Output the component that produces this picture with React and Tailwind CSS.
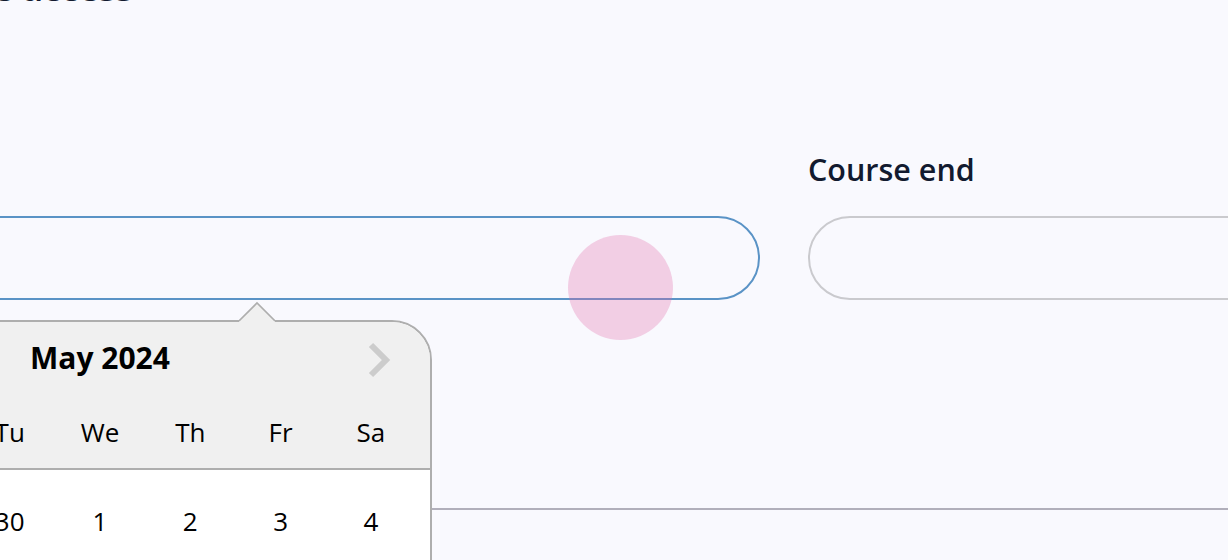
import React from "react";

const dayNames = ["Su", "Mo", "Tu", "We", "Th", "Fr", "Sa"];
const weeks = [
  ["28", "29", "30", "1", "2", "3", "4"],
  ["5", "6", "7", "8", "9", "10", "11"],
  ["12", "13", "14", "15", "16", "17", "18"],
  ["19", "20", "21", "22", "23", "24", "25"],
  ["26", "27", "28", "29", "30", "31", "1"],
];

function Chevron({ flip }) {
  return (
    <svg width="28" height="38" viewBox="0 0 28 38" style={flip ? { transform: "scaleX(-1)" } : undefined}>
      <polyline points="5,4 20,19 5,34" fill="none" stroke="#cccccc" strokeWidth="6" strokeLinecap="butt" strokeLinejoin="miter" />
    </svg>
  );
}

function Calendar() {
  return (
    <div className="absolute left-[166px] top-[102px] w-[664px] rounded-t-[40px] border-2 border-[#aeaeae] bg-white text-black">
      <svg className="absolute left-[469px] top-[-22px]" width="36" height="24" viewBox="0 0 36 24">
        <polygon points="0,21 18,3 36,21 36,24 0,24" fill="#f0f0f0" />
        <polyline points="0,21 18,3 36,21" fill="none" stroke="#aeaeae" strokeWidth="1.6" />
      </svg>
      <div className="relative rounded-t-[38px] border-b-2 border-[#aeaeae] bg-[#f0f0f0] pb-[23px] pt-[21px]">
        <button className="absolute left-[38px] top-[19px]" aria-label="Previous month">
          <Chevron flip />
        </button>
        <div className="h-[30px] text-center text-[30px] font-bold leading-none">May 2024</div>
        <button className="absolute left-[596px] top-[19px]" aria-label="Next month">
          <Chevron />
        </button>
        <div className="mt-[46px] grid grid-cols-7 px-[14px] text-center text-[26px] leading-none">
          {dayNames.map((d) => (
            <div key={d}>{d}</div>
          ))}
        </div>
      </div>
      <div className="flex flex-col gap-[62px] px-[14px] pb-[40px] pt-[38px]">
        {weeks.map((w, i) => (
          <div key={i} className="grid grid-cols-7 text-center text-[26px] leading-none">
            {w.map((d, j) => (
              <div key={j}>{d}</div>
            ))}
          </div>
        ))}
      </div>
    </div>
  );
}

export default function App() {
  return (
    <div className="relative h-[560px] w-[1228px] overflow-hidden bg-[#f9f9fe] font-['Open_Sans',sans-serif]">
      <section className="border-b-2 border-[#b1afbb] pb-[208px]">
        <h2 className="ml-[-106px] mt-[-29px] h-[34px] whitespace-nowrap text-[34.5px] font-bold leading-[34px] text-[#121a2f]">
          Course access
        </h2>
        <div className="ml-[-400px] mt-[149px] flex gap-[48px]">
          <div className="w-[1160px] shrink-0">
            <label className="block h-[30px] whitespace-nowrap text-[30.5px] font-semibold leading-[30px] text-[#121a2f]">
              Course start
            </label>
            <div className="relative mt-[32px] h-[84px] rounded-full border-2 border-[#5a93c6]">
              <input className="h-full w-full bg-transparent px-8 outline-none" aria-label="Course start" />
              <Calendar />
            </div>
          </div>
          <div className="w-[1160px] shrink-0">
            <label className="block h-[30px] whitespace-nowrap text-[30.5px] font-semibold leading-[30px] text-[#121a2f]">
              Course end
            </label>
            <div className="mt-[32px] h-[84px] rounded-full border-2 border-[#cacace]">
              <input className="h-full w-full bg-transparent px-8 outline-none" aria-label="Course end" />
            </div>
          </div>
        </div>
      </section>
      <div className="pointer-events-none absolute left-[568px] top-[235px] h-[105px] w-[105px] rounded-full bg-[rgba(226,105,169,0.3)]" />
    </div>
  );
}
